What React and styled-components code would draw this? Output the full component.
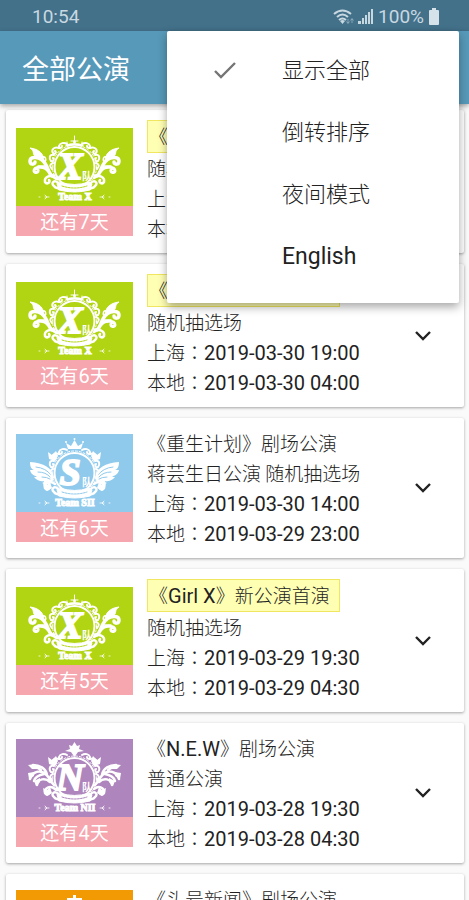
import {useState} from "react";
import styled, {createGlobalStyle} from "styled-components"

const menuItems = [
    {id: "all", label: "显示全部"},
    {id: "reverse", label: "倒转排序"},
    {id: "night", label: "夜间模式"},
    {id: "lang", label: "English"},
]

const shows = [
    {id: 1, team: "X", days: 7, title: "《Girl X》新公演首演", special: true, kind: "随机抽选场", shanghai: "2019-03-31 14:00", local: "2019-03-30 23:00"},
    {id: 2, team: "X", days: 6, title: "《Girl X》新公演首演", special: true, kind: "随机抽选场", shanghai: "2019-03-30 19:00", local: "2019-03-30 04:00"},
    {id: 3, team: "SII", days: 6, title: "《重生计划》剧场公演", kind: "蒋芸生日公演 随机抽选场", shanghai: "2019-03-30 14:00", local: "2019-03-29 23:00"},
    {id: 4, team: "X", days: 5, title: "《Girl X》新公演首演", special: true, kind: "随机抽选场", shanghai: "2019-03-29 19:30", local: "2019-03-29 04:30"},
    {id: 5, team: "NII", days: 4, title: "《N.E.W》剧场公演", kind: "普通公演", shanghai: "2019-03-28 19:30", local: "2019-03-28 04:30"},
    {id: 6, team: "HII", days: 3, title: "《头号新闻》剧场公演", kind: "普通公演", shanghai: "2019-03-27 19:30", local: "2019-03-27 04:30"},
]

const teamColors = {
    X: "#b1d512",
    SII: "#8fcaec",
    NII: "#ae85bd",
    HII: "#f29a04",
}

// latin runs are set one size up from the chinese around them
function Mixed({text}) {
    return text.split(/([\x21-\x7e][\x20-\x7e]*)/).map((part, i) =>
        i % 2 ? <Latin key={i}>{part}</Latin> : part)
}

// one half of each side ornament, the other is mirrored round x = 58.5
function Wing({team}) {
    if (team === "SII") {
        return <>
            <path fill="#fff" stroke="none" d="M38 43 C36 34 28 29 14 28 C14 32 15 35 18 36 C17 36 16 36 14 36 C15 40 18 42 21 42 C20 43 19 43 18 43 C21 47 26 48 28 47 C28 48 27 49 26 49 C31 52 37 50 38 43Z"/>
            <path stroke={teamColors.SII} strokeWidth="1" d="M20 33 Q30 34 35 41 M22 38 Q30 38 34 43 M26 43 Q31 43 34 45"/>
        </>
    }
    if (team === "X") {
        return <>
            <path strokeWidth="3.500" d="M38 48 C32 49 33 37 26 32 C21 28 14 29 14 33 C14 37 19 37 19 34"/>
            <path fill="#fff" strokeWidth="1" d="M28 33 C28 26 23 21 14 20 C19 23 16 26 19 28 C22 30 25 29 28 33Z"/>
            <path strokeWidth="3" d="M32 43 C28 37 18 39 18 43 C19 46 23 44 22 42"/>
            <path strokeWidth="1.500" d="M29 34 C31 31 29 28 27 29 M30 38 C26 38 24 38 22 38"/>
        </>
    }
    return <>
        <path strokeWidth="2.500" d="M38 46 C34 43 33 35 26 33 C21 31 15 35 14 40 M31 36 C30 29 23 26 17 26 L25 31 M34 43 C29 38 22 40 21 46 M28 35 C23 36 19 38 18 42"/>
        <path fill="#fff" stroke="none" d="M12 26 L19 25 L22 30 L16 30Z M12 34 L18 33 L18 37 L13 40Z M18 42 L24 39 L24 43 L20 47Z"/>
    </>
}

function SideOrnament({team}) {
    return <g>
        <Wing team={team}/>
        {/* scrollwork that climbs the ring */}
        <path strokeWidth="2" d="M51 16 C48 14 44 15 43 18 C43 21 46 20 46 18 M43 20 C38 18 35 22 37 25 C39 27 41 24 39 23 M38 27 C33 26 33 31 35 33 C38 34 38 31 37 30 M37 35 Q32 37 36 41"/>
        <path strokeWidth="2.500" d="M39 50 C34 46 28 49 29 54 C31 57 35 54 33 52 M42 55 C39 51 34 55 38 58 C40 61 42 59 43 61"/>
        {team !== "X" && <path fill="#fff" stroke="none" d="M32 18 L36 21 L40 17 L42 22 L39 27 L33 25Z M27 49 L31 51 L34 48 L36 54 L31 57 L28 54Z"/>}
        <path strokeWidth="1" opacity=".8" d="M29 69 h4 M29 67 l2 2 l-2 2 M23 69 h1"/>
    </g>
}

function Crown({team}) {
    if (team === "X") {
        return <>
            <path strokeWidth="1" d="M58.500 8 V17 M55 13 H62 M51 14 v3 M66 14 v3"/>
            <path fill="#fff" stroke="none" d="M58.500 11 L60 14 L58.500 17 L57 14Z M49 17 Q58.500 13 68 17 L66 19 Q58.500 16 51 19Z"/>
        </>
    }
    if (team === "SII") {
        return <>
            <path fill="#fff" stroke="none" d="M52 15 L50 9 L55 12 L58.500 6 L62 12 L67 9 L65 15Z"/>
            <circle cx="58.500" cy="5" r="1" fill="#fff" stroke="none"/>
            <circle cx="50" cy="8" r="1" fill="#fff" stroke="none"/>
            <circle cx="67" cy="8" r="1" fill="#fff" stroke="none"/>
        </>
    }
    if (team === "HII") {
        return <path fill="#fff" stroke="none" d="M57 5 H60 V8 H66 V15 H63 V11 H60 V17 H57 V11 H54 V15 H51 V8 H57Z"/>
    }
    return <path fill="#fff" stroke="none" d="M58.500 3 L61 7 L64 6 L63 10 L68 12 L62 13 L58.500 18 L55 13 L49 12 L54 10 L53 6 L56 7Z"/>
}

function Crest({team}) {
    return (
        <CrestSvg viewBox="0 0 117 78" $color={teamColors[team]} role="img" aria-label={"Team " + team}>
            <g fill="none" stroke="#fff" strokeLinecap="round" strokeLinejoin="round">
                <SideOrnament team={team}/>
                <g transform="matrix(-1 0 0 1 117 0)"><SideOrnament team={team}/></g>
                <Crown team={team}/>
                <circle cx="58.500" cy="39" r="20" strokeWidth="2" fill={teamColors[team]}/>
                <circle cx="58.500" cy="39" r="22" strokeWidth="1" strokeDasharray="2 2"/>
                <path fill="#fff" strokeWidth="1" d="M44 54 Q58.500 59 73 54 L76 56 L74 62 Q58.500 66 43 62 L41 56Z"/>
                <path stroke={teamColors[team]} strokeWidth="1" strokeDasharray="2 1" d="M46 58 Q58.500 62 71 58"/>
            </g>
            <Initial x="54" y="51">{team[0]}</Initial>
            <CrestSmall x="71" y="52" fontSize="10">队</CrestSmall>
            <TeamName x="59" y="72">Team {team}</TeamName>
        </CrestSvg>
    )
}

function ShowCard({show, open, onToggle}) {
    return (
        <Card>
            <Thumb>
                <Crest team={show.team}/>
                <Countdown>还有<Latin>{show.days}</Latin>天</Countdown>
            </Thumb>
            <Info>
                {show.special
                    ? <SpecialTitle><Mixed text={show.title}/></SpecialTitle>
                    : <Title><Mixed text={show.title}/></Title>}
                <Line>{show.kind}</Line>
                <Line>上海<Colon>：</Colon><Latin>{show.shanghai}</Latin></Line>
                <Line>本地<Colon>：</Colon><Latin>{show.local}</Latin></Line>
            </Info>
            <Expand aria-label="展开" aria-expanded={open} onClick={onToggle}>
                <svg width="18" height="12" viewBox="0 0 18 12" fill="none" stroke="#222" strokeWidth="2.400">
                    <path d={open ? "M2 10 L9 3 L16 10" : "M2 2 L9 9 L16 2"}/>
                </svg>
            </Expand>
        </Card>
    )
}

function StatusIcons() {
    return (
        <Status>
            <svg width="21" height="18" viewBox="0 0 21 18" fill="none" stroke="#c8d8e1" strokeWidth="2">
                <path d="M1 6 Q9.500 -1 18 6 M4 9 Q9.500 4 15 9 M6 12 Q9.500 9 13 12"/>
                <path fill="#c8d8e1" stroke="none" d="M7 13 Q9.500 11 12 13 L9.500 16Z"/>
                <path strokeWidth="1" opacity=".5" d="M15 11 v4 M13.500 13.500 l1.500 2 l1.500 -2 M19 15 v-4 M17.500 12.500 l1.500 -2 l1.500 2"/>
            </svg>
            <svg width="16" height="18" viewBox="0 0 16 18" fill="#c8d8e1">
                <path d="M0 13 h3 v3 h-3Z M4 10 h2 v6 h-2Z M7 7 h2 v9 h-2Z M10 4 h2 v12 h-2Z M13 1 h2 v15 h-2Z"/>
            </svg>
            <span>100%</span>
            <svg width="12" height="18" viewBox="0 0 12 18" fill="#d5e2e9">
                <path d="M4 0 h4 v2 h2 q1 0 1 1 v13 q0 1 -1 1 h-8 q-1 0 -1 -1 v-13 q0 -1 1 -1 h2Z"/>
            </svg>
        </Status>
    )
}

function App() {
    const [selected, setSelected] = useState("all")
    const [openId, setOpenId] = useState(undefined)

    return (
        <Screen>
            <GlobalStyle/>
            <StatusBar>
                <span>10:54</span>
                <StatusIcons/>
            </StatusBar>
            <AppBar>
                <Heading>全部公演</Heading>
                <Menu role="menu">
                    {menuItems.map(item => (
                        <MenuItem key={item.id} role="menuitemradio" aria-checked={item.id === selected}
                                  onClick={() => setSelected(item.id)}>
                            <CheckSlot>
                                {item.id === selected &&
                                    <svg width="24" height="20" viewBox="0 0 24 20" fill="none" stroke="#757575" strokeWidth="2.400">
                                        <path d="M2 10 L8 16 L22 2"/>
                                    </svg>}
                            </CheckSlot>
                            <MenuLabel $latin={item.id === "lang"}>{item.label}</MenuLabel>
                        </MenuItem>
                    ))}
                </Menu>
            </AppBar>
            <List>
                {shows.map(show => <ShowCard key={show.id} show={show} open={show.id === openId}
                                             onToggle={() => setOpenId(show.id === openId ? undefined : show.id)}/>)}
            </List>
        </Screen>
    );
}

const GlobalStyle = createGlobalStyle`
  * {
    box-sizing: border-box;
  }

  body {
    margin: 0;
    background: #fafafa;
    color: #222;
    font-family: Roboto, "Noto Sans CJK SC", sans-serif;
  }

  button {
    border: none;
    background: none;
    padding: 0;
    color: inherit;
    font: inherit;
    cursor: pointer;
  }
`

const Screen = styled.div`
  display: flex;
  flex-direction: column;
  height: 100vh;
  overflow: hidden;
`

const StatusBar = styled.div`
  flex: none;
  display: flex;
  justify-content: space-between;
  align-items: center;
  height: 31px;
  padding: 2px 29px 0 32px;
  background: #43718a;
  color: #c8d8e1;
  font-size: 19px;
`

const Status = styled.div`
  display: flex;
  align-items: center;
  gap: 4px;
`

const AppBar = styled.header`
  flex: none;
  position: relative;
  z-index: 1;
  display: flex;
  align-items: center;
  height: 73px;
  padding: 0 22px;
  background: #5799b9;
  box-shadow: 0 2px 5px rgba(0, 0, 0, 0.35);
`

const Heading = styled.h1`
  margin: 0;
  color: #fff;
  font-family: "Noto Sans CJK SC", sans-serif;
  font-size: 27px;
  font-weight: 400;
  line-height: 40px;
`

const Menu = styled.div`
  position: absolute;
  top: 0;
  right: 10px;
  width: 292px;
  padding: 9px 0 15px;
  border-radius: 2px;
  background: #fff;
  box-shadow: 0 4px 10px rgba(0, 0, 0, 0.35);
`

const MenuItem = styled.button`
  display: flex;
  align-items: center;
  width: 100%;
  height: 62px;
  text-align: left;
`

const CheckSlot = styled.span`
  display: flex;
  justify-content: center;
  width: 115px;
`

const MenuLabel = styled.span`
  font-size: ${props => props.$latin ? "23px" : "22px"};
  font-weight: ${props => props.$latin ? 400 : 300};
  line-height: 24px;
`

const List = styled.main`
  flex: 1;
  display: flex;
  flex-direction: column;
  gap: 11px;
  min-height: 0;
  padding: 6px 5px 6px 6px;
  overflow: hidden;
`

const Card = styled.article`
  flex: none;
  display: flex;
  align-items: center;
  gap: 14px;
  padding: 10px 25px 10px 10px;
  border-radius: 2px;
  background: #fff;
  box-shadow: 0 1px 3px rgba(0, 0, 0, 0.35);
`

const Thumb = styled.div`
  flex: none;
  width: 117px;
`

const CrestSvg = styled.svg`
  display: block;
  width: 100%;
  background: ${props => props.$color};
`

const CrestSmall = styled.text`
  fill: #fff;
  font-family: "Noto Sans CJK SC", sans-serif;
  font-weight: 700;
  text-anchor: middle;
`

const Initial = styled.text`
  fill: #fff;
  stroke: #fff;
  stroke-width: 2px;
  font-family: "Liberation Serif", serif;
  font-size: 38px;
  font-style: italic;
  font-weight: 700;
  text-anchor: middle;
`

const TeamName = styled.text`
  fill: #fff;
  stroke: #fff;
  stroke-width: 1px;
  font-family: "Liberation Serif", serif;
  font-size: 10px;
  font-weight: 700;
  text-anchor: middle;
`

const Countdown = styled.div`
  background: #f6a6af;
  color: #fff;
  font-family: "Noto Sans CJK SC", sans-serif;
  font-size: 19px;
  line-height: 30px;
  text-align: center;
`

const Info = styled.div`
  flex: 1;
  min-width: 0;
  font-family: "Noto Sans CJK SC", sans-serif;
  font-size: 19px;
  font-weight: 300;
`

const Line = styled.p`
  margin: 0;
  height: 30px;
  line-height: 30px;
  white-space: nowrap;
`

const Title = styled.h2`
  margin: 0;
  height: 30px;
  font-size: 19px;
  font-weight: 300;
  line-height: 30px;
  white-space: nowrap;
`

const SpecialTitle = styled(Title)`
  width: fit-content;
  height: 33px;
  padding: 0 9px 0 1px;
  border: 1px solid #f0e660;
  background: #ffffb4;
`

const Latin = styled.span`
  font-family: Roboto, sans-serif;
  font-size: 20px;
  font-weight: 400;
  line-height: 24px;
`

const Colon = styled.span`
  font-family: "Noto Sans CJK TC", sans-serif;
`

const Expand = styled.button`
  flex: none;
  display: flex;
  justify-content: center;
  width: 32px;
  padding: 10px 0;
`

export default App;
